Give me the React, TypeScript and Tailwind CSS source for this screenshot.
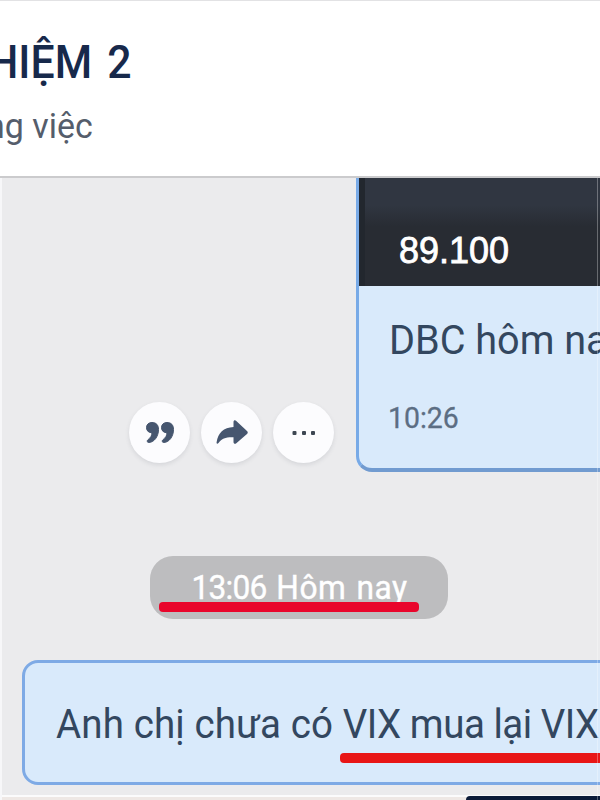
import React from "react";

function ActionButton({ children }: { children: React.ReactNode }) {
  return (
    <button className="flex h-[61px] w-[61px] items-center justify-center rounded-full bg-[#fcfcfe] text-[#46566f] shadow-[0_2px_4px_rgba(70,75,90,0.13)]">
      {children}
    </button>
  );
}

function Header() {
  return (
    <header className="h-[178px] w-full border-t border-b-2 border-t-[#e2e2e4] border-b-[#cbcbcd] bg-white whitespace-nowrap">
      <div className="flex flex-col items-start">
        <h1 className="mt-[33px] -ml-[12px] h-[56px] origin-left scale-x-[0.93] text-[46px] leading-[56px] font-medium text-[#17294b] [word-spacing:5px]">HIỆM 2</h1>
        <p className="mt-[15px] -ml-[14px] h-[44px] origin-left scale-x-[0.97] text-[35px] leading-[44px] text-[#555d6b]">ng việc</p>
      </div>
    </header>
  );
}

function StockMessage() {
  return (
    <section className="flex h-[294px] items-end justify-end">
      <div className="mr-[22px] mb-[9px] flex gap-[11px]">
        <ActionButton>
          <svg width="28" height="22" viewBox="0 0 28 22" fill="currentColor" stroke="currentColor" strokeWidth="1">
            <path d="M6 .5C2.500.5.5 2.700.5 5.700s2.100 5 5.400 5c.2 3-1.500 5.100-4.200 7.300-.8.700-.5 2.500.8 2.500C8.500 20.500 12.500 14 12.500 7.500 12.500 3 10.200.5 6 .5Z" />
            <path d="M21 .5c-3.500 0-5.500 2.200-5.500 5.200s2.100 5 5.400 5c.2 3-1.500 5.100-4.200 7.300-.8.700-.5 2.500.8 2.500 6 0 10-6.500 10-13C27.500 3 25.200.5 21 .5Z" />
          </svg>
        </ActionButton>
        <ActionButton>
          <svg width="32" height="25" viewBox="0 0 32 25" fill="currentColor">
            <path d="M17.500 2c0-1.700 1.600-2.200 2.800-1.100L31 11c1 1 1 2 0 3L20.300 23.300c-1.200 1.100-2.800.5-2.800-1.200v-4.800C10 17 6 18.500 2.500 23 1.500 24.300.3 24 .6 22.200 2 13 7.500 7.500 17.500 7Z" />
          </svg>
        </ActionButton>
        <ActionButton>
          <svg width="24" height="6" viewBox="0 0 24 6" fill="#3d4652">
            <rect x="0.500" y="1" width="4" height="4" rx="1" />
            <rect x="10" y="1" width="4" height="4" rx="1" />
            <rect x="19" y="1" width="4" height="4" rx="1" />
          </svg>
        </ActionButton>
      </div>
      <article className="h-[294px] w-[244px] shrink-0 overflow-hidden rounded-bl-[16px] border-b-[4px] border-l-[3px] border-b-[#719bd0] border-l-[#78aae7] bg-[#d9eafb] whitespace-nowrap text-[#33475f]">
        <div className="flex h-[108px] border-l-[6px] border-[#22272e] bg-linear-to-b from-[#303641] from-25% to-[#282c33] to-45% pt-[49px] pl-[34px] font-['Liberation_Sans',sans-serif] text-[36px] leading-[48px] text-white">
          <span className="h-[48px] [-webkit-text-stroke:0.8px_white]">89.100</span>
        </div>
        <p className="mt-[31px] ml-[30px] h-[48px] w-max origin-left scale-x-[0.99] text-[40px] leading-[48px]">DBC hôm nay</p>
        <time className="mt-[35px] ml-[29px] block h-[36px] w-max origin-left scale-x-[0.98] text-[29px] leading-[36px] text-[#5c6e83] [-webkit-text-stroke:0.3px_#5c6e83]">10:26</time>
      </article>
    </section>
  );
}

export default function App() {
  return (
    <div className="h-[800px] w-[600px] overflow-hidden bg-[#ebebed] font-['Roboto','Noto_Sans',sans-serif]">
      <Header />
      <main className="relative h-[622px] overflow-hidden border-l-2 border-[#f7f7f9]">
        <StockMessage />
        <div className="relative mt-[84px] ml-[148px] flex h-[63px] w-[298px] justify-center rounded-[23px] bg-[#bdbdbf] text-white">
          <span className="mt-[12px] h-[40px] scale-x-[0.96] text-[33px] leading-[40px] whitespace-nowrap [-webkit-text-stroke:0.4px_white] [word-spacing:2px]">
            <span className="tracking-[-0.8px]">13:06</span> <span className="tracking-[0.5px]">Hôm nay</span>
          </span>
          <div className="absolute top-[46px] left-[9px] h-[10px] w-[260px] rounded-[4px] bg-[#e9052b]" />
        </div>
        <article className="relative mt-[41px] ml-[20px] h-[125px] w-[600px] rounded-l-[16px] border-[3px] border-[#7eaae5] bg-[#d9eafb] text-[#33475f]">
          <p className="mt-[38px] ml-[31px] h-[48px] w-max origin-left scale-x-[0.963] text-[40px] leading-[48px] whitespace-nowrap">
            <span className="tracking-[0.12px]">Anh chị chưa có </span>
            <span className="tracking-[-0.5px]">VIX mua lại VIX</span>
          </p>
          <div className="absolute top-[90px] left-[315px] h-[10px] w-[300px] rounded-[4px] bg-[#e81616]" />
        </article>
        <div className="mt-[10px] flex h-[5px] border-t-2 border-[#fbfbfc] bg-[#eee8e5]" />
        <div className="absolute right-0 bottom-0 h-[4px] w-[134px] rounded-tl-[6px] bg-[#0b1b38]" />
        <div className="absolute top-0 right-[2px] h-full w-px bg-white/30" />
      </main>
    </div>
  );
}
